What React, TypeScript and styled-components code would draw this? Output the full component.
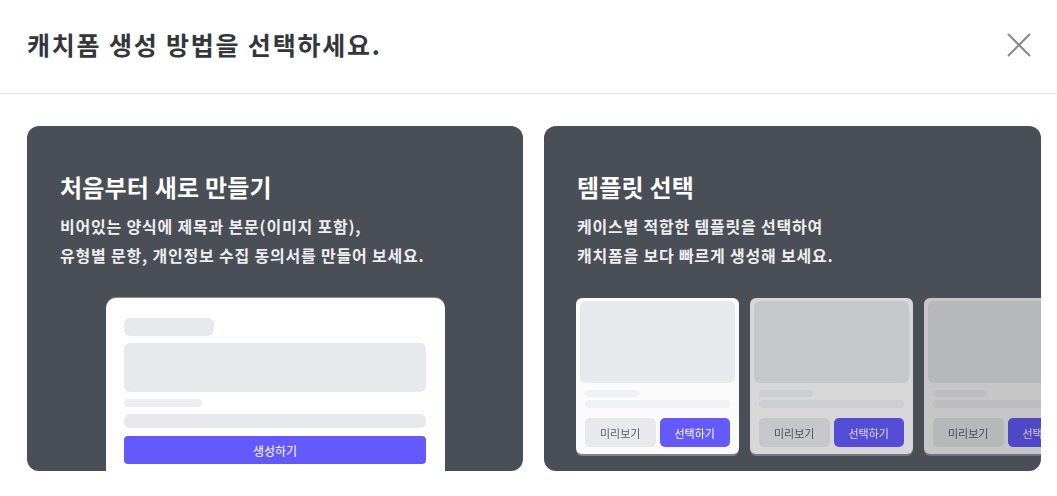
import styled, { createGlobalStyle } from 'styled-components';

const GlobalStyle = createGlobalStyle`
  html, body {
    margin: 0;
    padding: 0;
    background: #ffffff;
    font-family: "Noto Sans CJK KR", "Noto Sans", sans-serif;
  }
  * { box-sizing: border-box; }
`;

const Modal = styled.div`
  width: 1057px;
  height: 496px;
  overflow: hidden;
  background: #fff;
`;

const Header = styled.header`
  height: 94px;
  display: flex;
  align-items: center;
  justify-content: space-between;
  padding: 0 26px 0 27px;
  border-bottom: 1px solid #e6e7ea;
`;

const Title = styled.h1`
  margin: 0;
  font-size: 25px;
  font-weight: 700;
  color: #34363b;
  letter-spacing: 1.8px;
  padding-bottom: 6px;
`;

const CloseButton = styled.button`
  width: 24px;
  height: 24px;
  padding: 0;
  border: 0;
  background: none;
  display: flex;
  cursor: pointer;
  margin-top: -4px;
`;

const Body = styled.div`
  display: grid;
  grid-template-columns: 496px 497px;
  gap: 21px;
  padding: 32px 0 0 27px;
`;

const Card = styled.section`
  height: 345px;
  border-radius: 12px;
  background: #4a4e56;
  padding: 45px 0 0 33px;
  overflow: hidden;
  display: flex;
  flex-direction: column;
`;

const CardTitle = styled.h2`
  margin: 0;
  font-size: 24px;
  line-height: 32px;
  font-weight: 700;
  color: #ffffff;
  letter-spacing: 0.2px;
`;

const CardDesc = styled.p`
  margin: 9px 0 0;
  font-size: 16px;
  line-height: 29px;
  font-weight: 700;
  letter-spacing: 0.8px;
  color: #eceef1;
`;

const Preview = styled.div`
  margin: 28px 0 0 46px;
  width: 339px;
  background: #fff;
  border-radius: 10px 10px 0 0;
  box-shadow: 0 -1px 0 rgba(255, 255, 255, 0.35);
  padding: 20px 19px 20px 18px;
  display: flex;
  flex-direction: column;
`;

const Block = styled.div<{ $w?: number; $h: number; $mt: number; $tone?: string }>`
  width: ${(p) => (p.$w ? `${p.$w}px` : '100%')};
  height: ${(p) => p.$h}px;
  margin-top: ${(p) => p.$mt}px;
  border-radius: ${(p) => (p.$h > 12 ? 6 : 4)}px;
  background: ${(p) => p.$tone || '#e8e9ed'};
`;

const CreateButton = styled.button`
  margin-top: 8px;
  height: 28px;
  width: 100%;
  border: 0;
  border-radius: 4px;
  background: #645afb;
  color: #fff;
  font-family: inherit;
  font-size: 12px;
`;

const ThumbRow = styled.div`
  margin-top: 28px;
  margin-left: -1px;
  display: flex;
  gap: 11px;
`;

const Thumb = styled.div<{ $dim: number }>`
  flex: 0 0 163px;
  height: 156px;
  border-radius: 6px;
  background: #fbfbfc;
  box-shadow: 0 2px 0 rgba(255, 255, 255, 0.3);
  padding: 3px 4px 0;
  display: flex;
  flex-direction: column;
  filter: brightness(${(p) => p.$dim});
`;

const ThumbImage = styled.div`
  height: 82px;
  border-radius: 6px;
  background: #e8e9ec;
`;

const ThumbInfo = styled.div`
  padding: 0 5px;
  display: flex;
  flex-direction: column;
`;

const ThumbActions = styled.div`
  margin-top: 10px;
  display: flex;
  gap: 4px;
`;

const SmallButton = styled.button<{ $primary?: boolean }>`
  flex: 1;
  height: 29px;
  border: 0;
  border-radius: 5px;
  background: ${(p) => (p.$primary ? '#645afb' : '#e8e9ec')};
  color: ${(p) => (p.$primary ? '#ffffff' : '#5b5e64')};
  font-family: inherit;
  font-size: 11px;
`;

const templates = [1, 0.855, 0.79];

export default function App() {
  return (
    <>
      <GlobalStyle />
      <Modal>
        <Header>
          <Title>캐치폼 생성 방법을 선택하세요.</Title>
          <CloseButton aria-label="닫기">
            <svg width="24" height="24" viewBox="0 0 24 24">
              <path d="M1 1 L23 23 M23 1 L1 23" stroke="#87898e" strokeWidth="2" fill="none" />
            </svg>
          </CloseButton>
        </Header>
        <Body>
          <Card>
            <CardTitle>처음부터 새로 만들기</CardTitle>
            <CardDesc>
              비어있는 양식에 제목과 본문(이미지 포함),
              <br />
              유형별 문항, 개인정보 수집 동의서를 만들어 보세요.
            </CardDesc>
            <Preview>
              <Block $w={90} $h={18} $mt={0} />
              <Block $h={49} $mt={7} />
              <Block $w={78} $h={8} $mt={7} $tone="#eceef1" />
              <Block $h={14} $mt={7} />
              <CreateButton>생성하기</CreateButton>
            </Preview>
          </Card>
          <Card>
            <CardTitle>템플릿 선택</CardTitle>
            <CardDesc>
              케이스별 적합한 템플릿을 선택하여
              <br />
              캐치폼을 보다 빠르게 생성해 보세요.
            </CardDesc>
            <ThumbRow>
              {templates.map((dim, i) => (
                <Thumb key={i} $dim={dim}>
                  <ThumbImage />
                  <ThumbInfo>
                    <Block $w={54} $h={7} $mt={7} $tone="#f0f1f3" />
                    <Block $h={8} $mt={3} $tone="#f0f1f3" />
                    <ThumbActions>
                      <SmallButton>미리보기</SmallButton>
                      <SmallButton $primary>선택하기</SmallButton>
                    </ThumbActions>
                  </ThumbInfo>
                </Thumb>
              ))}
            </ThumbRow>
          </Card>
        </Body>
      </Modal>
    </>
  );
}
